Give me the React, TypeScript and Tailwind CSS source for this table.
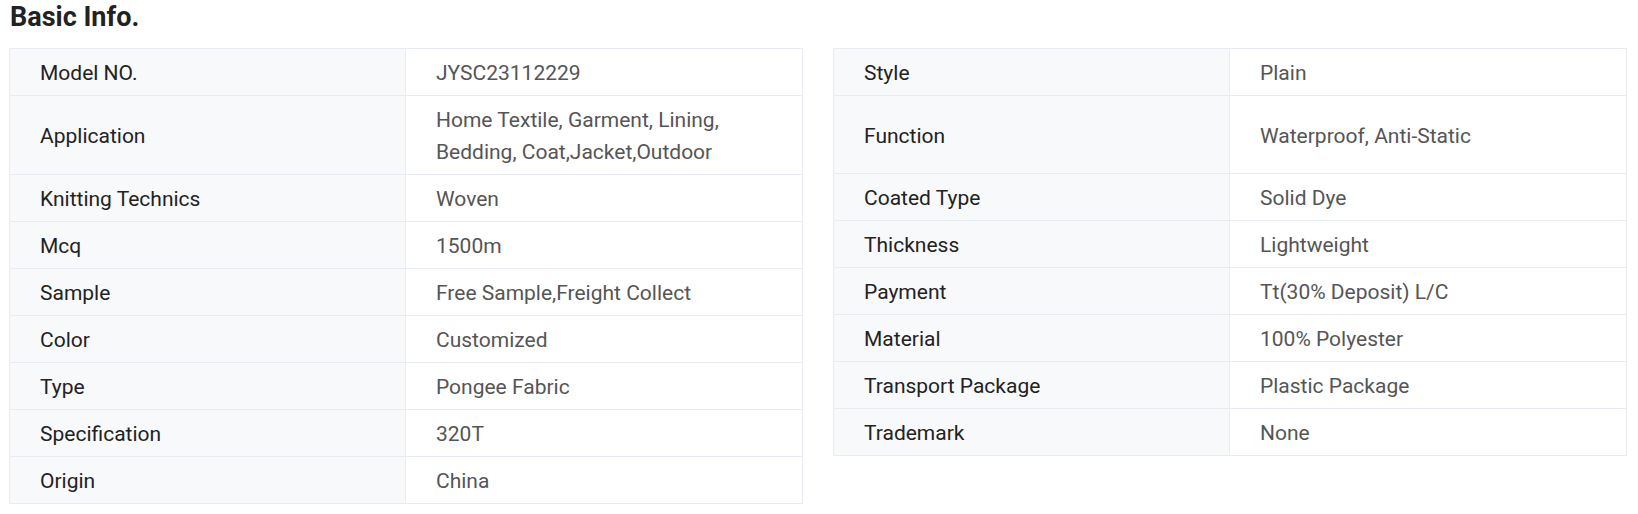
const left: [string, string][] = [
  ["Model NO.", "JYSC23112229"],
  ["Application", "Home Textile, Garment, Lining, Bedding, Coat,Jacket,Outdoor"],
  ["Knitting Technics", "Woven"],
  ["Mcq", "1500m"],
  ["Sample", "Free Sample,Freight Collect"],
  ["Color", "Customized"],
  ["Type", "Pongee Fabric"],
  ["Specification", "320T"],
  ["Origin", "China"],
];

const right: [string, string][] = [
  ["Style", "Plain"],
  ["Function", "Waterproof, Anti-Static"],
  ["Coated Type", "Solid Dye"],
  ["Thickness", "Lightweight"],
  ["Payment", "Tt(30% Deposit) L/C"],
  ["Material", "100% Polyester"],
  ["Transport Package", "Plastic Package"],
  ["Trademark", "None"],
];

function InfoTable({ rows }: { rows: [string, string][] }) {
  return (
    <div className="flex-1 self-start border border-[#e8ecf2]">
      {rows.map(([label, value], i) => (
        <div
          key={label}
          className={`flex ${i === 1 ? "min-h-[78px]" : "min-h-[46px]"} ${
            i < rows.length - 1 ? "border-b border-[#e8ecf2]" : ""
          }`}
        >
          <div className="flex w-1/2 items-center border-r border-[#e8ecf2] bg-[#f8f9fb] pt-[8px] pb-[6px] pl-[30px] pr-4 text-[#222]">
            {label}
          </div>
          <div className="flex w-1/2 items-center bg-white pt-[8px] pb-[6px] pl-[30px] pr-[60px] text-[#555]">
            {value}
          </div>
        </div>
      ))}
    </div>
  );
}

export default function App() {
  return (
    <div
      className="min-h-[514px] bg-white pl-[9px] pr-[11px] pt-[2px] text-[21px] leading-[32px]"
      style={{ fontFamily: "Roboto, 'Liberation Sans', sans-serif" }}
    >
      <h2 className="pl-px text-[27px] font-bold leading-[30px] text-[#222]">Basic Info.</h2>
      <div className="mt-4 flex gap-[30px]">
        <InfoTable rows={left} />
        <InfoTable rows={right} />
      </div>
    </div>
  );
}
